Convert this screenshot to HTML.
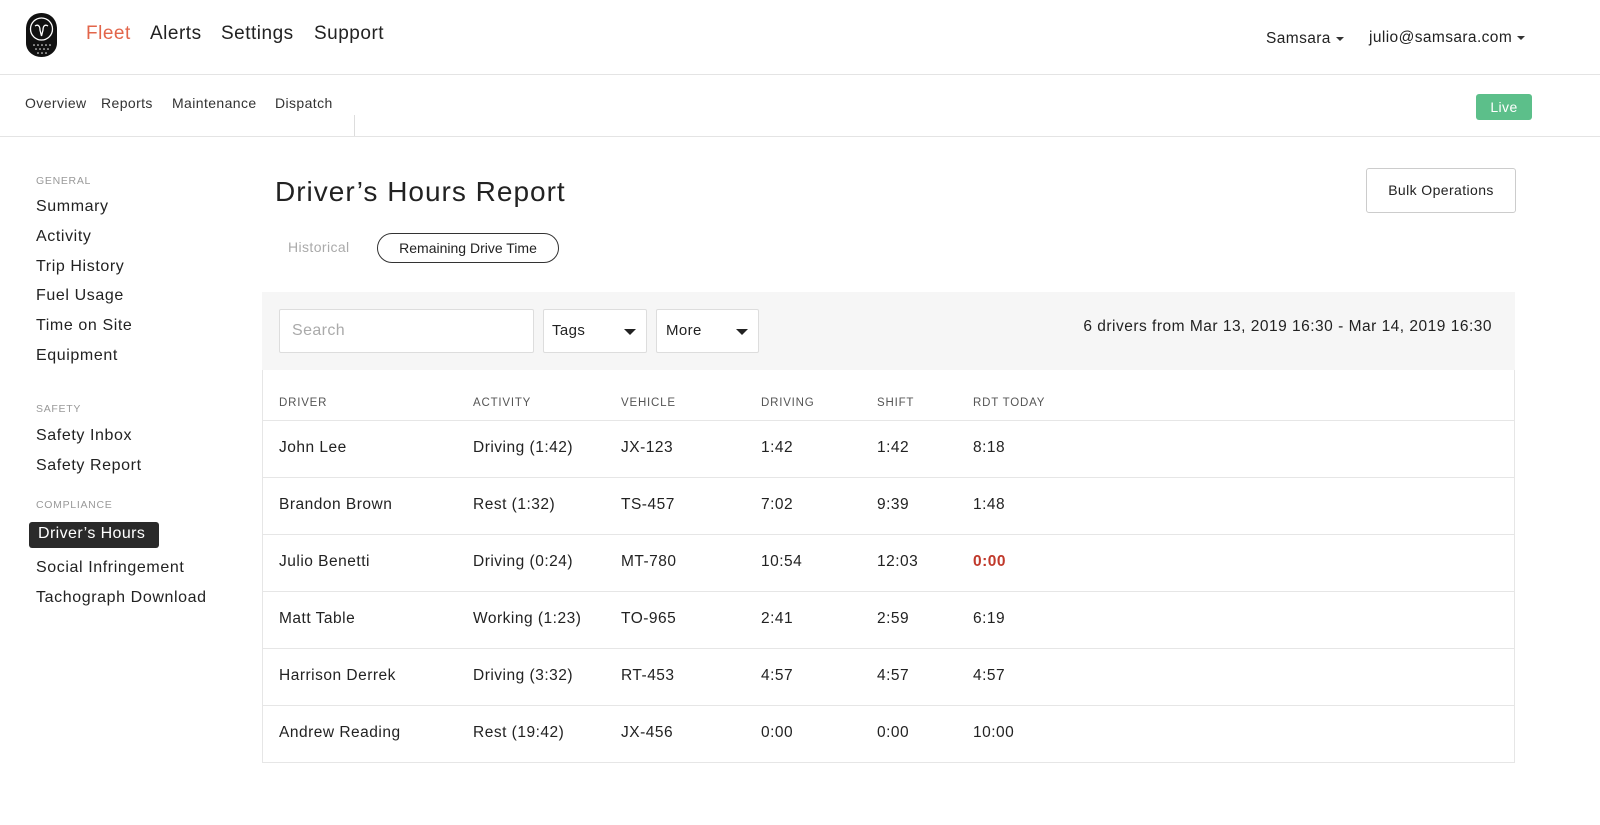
<!DOCTYPE html>
<html><head><meta charset="utf-8"><style>
*{margin:0;padding:0;box-sizing:border-box}
body{width:1600px;height:825px;background:#fff;font-family:"Liberation Sans",sans-serif;color:#222;position:relative;overflow:hidden;letter-spacing:.4px}
.a{position:absolute;white-space:nowrap}
.nav{font-size:19px;top:23px;letter-spacing:.5px}
.sub{font-size:14px;top:95px;color:#333}
.sb{font-size:16px;left:36px;color:#222;letter-spacing:.6px}
.sh{font-size:10.5px;left:36px;color:#999;letter-spacing:.7px}
.th{font-size:11.5px;color:#555;letter-spacing:.8px;top:397px}
.td{font-size:15.5px;color:#222;letter-spacing:.5px}
.line{position:absolute;left:262px;width:1253px;height:1px;background:#e6e6e6}
.caret{display:inline-block;width:0;height:0;border-left:4px solid transparent;border-right:4px solid transparent;border-top:4px solid #333;vertical-align:middle;margin-left:5px}
</style></head><body>
<svg class="a" style="left:25px;top:12px" width="33" height="46" viewBox="0 0 33 46">
<path d="M16.5 1C7 1 1 8 1 17v14c0 8 7 14 15.5 14S32 39 32 31V17C32 8 26 1 16.5 1z" fill="#111"/>
<circle cx="16.5" cy="17" r="11" fill="none" stroke="#fff" stroke-width="1.3"/>
<path d="M10 14c3-2 5 0 5 4l1.5 6 1.5-6c0-4 2-6 5-4" fill="none" stroke="#fff" stroke-width="1.3"/>
<g fill="#fff"><circle cx="9" cy="33" r=".8"/><circle cx="13" cy="33" r=".8"/><circle cx="17" cy="33" r=".8"/><circle cx="21" cy="33" r=".8"/><circle cx="25" cy="33" r=".8"/><circle cx="11" cy="37" r=".8"/><circle cx="15" cy="37" r=".8"/><circle cx="19" cy="37" r=".8"/><circle cx="23" cy="37" r=".8"/><circle cx="13" cy="41" r=".8"/><circle cx="17" cy="41" r=".8"/><circle cx="21" cy="41" r=".8"/></g>
</svg>
<div class="a nav" style="left:86px;color:#e2654a">Fleet</div>
<div class="a nav" style="left:150px">Alerts</div>
<div class="a nav" style="left:221px">Settings</div>
<div class="a nav" style="left:314px">Support</div>
<div class="a" style="left:1266px;top:30px;font-size:15.5px">Samsara<span class="caret"></span></div>
<div class="a" style="left:1369px;top:29px;font-size:15.5px">julio@samsara.com<span class="caret"></span></div>
<div class="a" style="left:0;top:74px;width:1600px;height:1px;background:#e4e4e4"></div>
<div class="a sub" style="left:25px">Overview</div>
<div class="a sub" style="left:101px">Reports</div>
<div class="a sub" style="left:172px">Maintenance</div>
<div class="a sub" style="left:275px">Dispatch</div>
<div class="a" style="left:354px;top:115px;width:1px;height:22px;background:#ddd"></div>
<div class="a" style="left:1476px;top:94px;width:56px;height:26px;background:#5cbf8a;border-radius:3px;color:#fff;font-size:14px;text-align:center;line-height:26px">Live</div>
<div class="a" style="left:0;top:136px;width:1600px;height:1px;background:#e4e4e4"></div>

<div class="a sh" style="top:175px">GENERAL</div>
<div class="a sb" style="top:198px">Summary</div>
<div class="a sb" style="top:228px">Activity</div>
<div class="a sb" style="top:258px">Trip History</div>
<div class="a sb" style="top:287px">Fuel Usage</div>
<div class="a sb" style="top:317px">Time on Site</div>
<div class="a sb" style="top:347px">Equipment</div>
<div class="a sh" style="top:403px">SAFETY</div>
<div class="a sb" style="top:427px">Safety Inbox</div>
<div class="a sb" style="top:457px">Safety Report</div>
<div class="a sh" style="top:499px">COMPLIANCE</div>
<div class="a" style="left:29px;top:522px;width:130px;height:26px;background:#2a2a2a;border-radius:3px;color:#fff;font-size:16px;padding-left:9px;line-height:24px">Driver’s Hours</div>
<div class="a sb" style="top:559px">Social Infringement</div>
<div class="a sb" style="top:589px">Tachograph Download</div>

<div class="a" style="left:275px;top:176px;font-size:28px;color:#222;letter-spacing:1px">Driver’s Hours Report</div>
<div class="a" style="left:1366px;top:168px;width:150px;height:45px;border:1px solid #ccc;border-radius:3px;font-size:14px;text-align:center;line-height:43px">Bulk Operations</div>
<div class="a" style="left:288px;top:239px;font-size:14px;color:#aaa">Historical</div>
<div class="a" style="left:377px;top:233px;width:182px;height:30px;border:1px solid #333;border-radius:15px;font-size:14px;text-align:center;line-height:28px;letter-spacing:0">Remaining Drive Time</div>

<div class="a" style="left:262px;top:292px;width:1253px;height:471px;border:1px solid #e6e6e6"></div>
<div class="a" style="left:262px;top:292px;width:1253px;height:78px;background:#f6f6f6"></div>
<div class="a" style="left:279px;top:309px;width:255px;height:44px;background:#fff;border:1px solid #ddd;border-radius:2px;font-size:16px;color:#aaa;padding-left:12px;line-height:42px">Search</div>
<div class="a" style="left:543px;top:309px;width:104px;height:44px;background:#fff;border:1px solid #ddd;border-radius:2px;font-size:15px;padding-left:8px;line-height:42px">Tags<span class="a" style="right:10px;top:19px;border-left:6px solid transparent;border-right:6px solid transparent;border-top:6px solid #222"></span></div>
<div class="a" style="left:656px;top:309px;width:103px;height:44px;background:#fff;border:1px solid #ddd;border-radius:2px;font-size:15px;padding-left:9px;line-height:42px">More<span class="a" style="right:10px;top:19px;border-left:6px solid transparent;border-right:6px solid transparent;border-top:6px solid #222"></span></div>
<div class="a" style="right:108px;top:318px;font-size:15.5px;letter-spacing:.5px">6 drivers from Mar 13, 2019 16:30 - Mar 14, 2019 16:30</div>

<div class="a th" style="left:279px">DRIVER</div>
<div class="a th" style="left:473px">ACTIVITY</div>
<div class="a th" style="left:621px">VEHICLE</div>
<div class="a th" style="left:761px">DRIVING</div>
<div class="a th" style="left:877px">SHIFT</div>
<div class="a th" style="left:973px">RDT TODAY</div>
<div class="line" style="top:420px"></div>
<div class="line" style="top:477px"></div>
<div class="line" style="top:534px"></div>
<div class="line" style="top:591px"></div>
<div class="line" style="top:648px"></div>
<div class="line" style="top:705px"></div>

<div class="a td" style="left:279px;top:439px">John Lee</div><div class="a td" style="left:473px;top:439px">Driving (1:42)</div><div class="a td" style="left:621px;top:439px">JX-123</div><div class="a td" style="left:761px;top:439px">1:42</div><div class="a td" style="left:877px;top:439px">1:42</div><div class="a td" style="left:973px;top:439px">8:18</div>
<div class="a td" style="left:279px;top:496px">Brandon Brown</div><div class="a td" style="left:473px;top:496px">Rest (1:32)</div><div class="a td" style="left:621px;top:496px">TS-457</div><div class="a td" style="left:761px;top:496px">7:02</div><div class="a td" style="left:877px;top:496px">9:39</div><div class="a td" style="left:973px;top:496px">1:48</div>
<div class="a td" style="left:279px;top:553px">Julio Benetti</div><div class="a td" style="left:473px;top:553px">Driving (0:24)</div><div class="a td" style="left:621px;top:553px">MT-780</div><div class="a td" style="left:761px;top:553px">10:54</div><div class="a td" style="left:877px;top:553px">12:03</div><div class="a td" style="left:973px;top:553px;color:#c0392b;font-weight:bold">0:00</div>
<div class="a td" style="left:279px;top:610px">Matt Table</div><div class="a td" style="left:473px;top:610px">Working (1:23)</div><div class="a td" style="left:621px;top:610px">TO-965</div><div class="a td" style="left:761px;top:610px">2:41</div><div class="a td" style="left:877px;top:610px">2:59</div><div class="a td" style="left:973px;top:610px">6:19</div>
<div class="a td" style="left:279px;top:667px">Harrison Derrek</div><div class="a td" style="left:473px;top:667px">Driving (3:32)</div><div class="a td" style="left:621px;top:667px">RT-453</div><div class="a td" style="left:761px;top:667px">4:57</div><div class="a td" style="left:877px;top:667px">4:57</div><div class="a td" style="left:973px;top:667px">4:57</div>
<div class="a td" style="left:279px;top:724px">Andrew Reading</div><div class="a td" style="left:473px;top:724px">Rest (19:42)</div><div class="a td" style="left:621px;top:724px">JX-456</div><div class="a td" style="left:761px;top:724px">0:00</div><div class="a td" style="left:877px;top:724px">0:00</div><div class="a td" style="left:973px;top:724px">10:00</div>
</body></html>
